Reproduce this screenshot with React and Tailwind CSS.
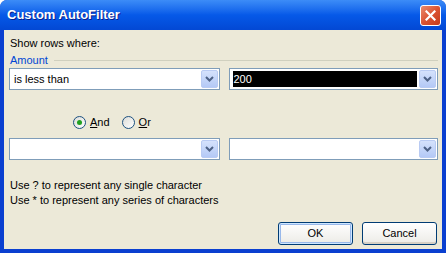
import React from 'react';

// XP-style "Custom AutoFilter" dialog

const Chevron = () => (
  <svg width="9" height="6" viewBox="0 0 9 6">
    <path d="M1 1 L4.5 4.5 L8 1" fill="none" stroke="#4D6185" strokeWidth="2" />
  </svg>
);

const Combo = ({ value = '', highlighted = false, className = '' }) => (
  <div className={`flex h-[22px] items-stretch border border-[#7F9DB9] bg-white ${className}`}>
    <div className="flex flex-1 items-center pl-[3px] pr-[1px] py-[2px]">
      {highlighted ? (
        <div className="flex h-full w-full items-center bg-black pl-[1px] text-white">{value}</div>
      ) : (
        <span className="pl-[1px]">{value}</span>
      )}
    </div>
    <div className="m-[1px] flex w-[17px] items-center justify-center rounded-[2px] border border-[#B9CBF3] bg-gradient-to-b from-[#D5E2FC] to-[#B4C9F6]">
      <Chevron />
    </div>
  </div>
);

const Radio = ({ checked, label, accessKey }) => (
  <label className="flex items-center gap-[4px]">
    <span className="flex h-[13px] w-[13px] items-center justify-center rounded-full border border-[#1C5180] bg-gradient-to-br from-[#DCDCD7] to-white">
      {checked && <span className="h-[5px] w-[5px] rounded-full bg-[#21A121]" />}
    </span>
    <span>
      <span className="underline">{accessKey}</span>
      {label}
    </span>
  </label>
);

const XpButton = ({ children, isDefault = false }) => (
  <button
    className={`flex h-[23px] w-[75px] items-center justify-center rounded-[3px] border border-[#003C74] bg-gradient-to-b from-white to-[#ECEBE6] text-black ${
      isDefault ? 'shadow-[inset_0_0_0_1px_#CEE7FF,inset_0_0_0_2px_#98B8EA]' : 'shadow-[inset_0_-2px_0_#D6D0C5]'
    }`}
  >
    {children}
  </button>
);

export default function App() {
  return (
    <div
      className="flex h-[253px] w-[446px] flex-col overflow-hidden rounded-t-[7px] bg-[#0A3FD0] text-[11px] text-black"
      style={{ fontFamily: '"Liberation Sans", Arial, sans-serif' }}
    >
      {/* Title bar */}
      <div className="flex h-[30px] items-center justify-between bg-gradient-to-b from-[#3C8CF7] via-[#0659E8] to-[#0348D4] pl-[7px] pr-[5px]">
        <span className="text-[13px] font-bold text-white [text-shadow:1px_1px_0_#0A1E8C]">Custom AutoFilter</span>
        <div className="flex h-[21px] w-[21px] items-center justify-center rounded-[3px] border border-white bg-gradient-to-br from-[#E98A6C] via-[#DB5332] to-[#C53A18]">
          <svg width="11" height="11" viewBox="0 0 11 11">
            <path d="M1.5 1.5 L9.5 9.5 M9.5 1.5 L1.5 9.5" stroke="white" strokeWidth="2.2" strokeLinecap="square" />
          </svg>
        </div>
      </div>

      {/* Body */}
      <div className="mx-[4px] mb-[4px] flex flex-1 flex-col bg-[#ECE9D8] pl-[5px] pr-[4px]">
        <div className="mt-[7px] pl-[1px] leading-[13px]">Show rows where:</div>
        <div className="mt-[4px] flex items-center gap-[6px] pl-[1px] leading-[13px]">
          <span className="text-[#0046D5]">Amount</span>
          <div className="h-[2px] flex-1 border-t border-[#D0D0BF] border-b-white" />
        </div>

        <div className="mt-[1px] flex gap-[9px]">
          <Combo className="w-[211px]" value="is less than" />
          <Combo className="w-[210px]" value="200" highlighted />
        </div>

        <div className="mt-[26px] flex gap-[12px] pl-[64px] leading-[13px]">
          <Radio checked accessKey="A" label="nd" />
          <Radio accessKey="O" label="r" />
        </div>

        <div className="mt-[9px] flex gap-[9px]">
          <Combo className="w-[211px]" />
          <Combo className="w-[210px]" />
        </div>

        <div className="mt-[18px] pl-[1px] leading-[15px]">
          <div>Use ? to represent any single character</div>
          <div>Use * to represent any series of characters</div>
        </div>

        <div className="mt-[14px] flex justify-end gap-[9px] pr-[1px]">
          <XpButton isDefault>OK</XpButton>
          <XpButton>Cancel</XpButton>
        </div>
      </div>
    </div>
  );
}
